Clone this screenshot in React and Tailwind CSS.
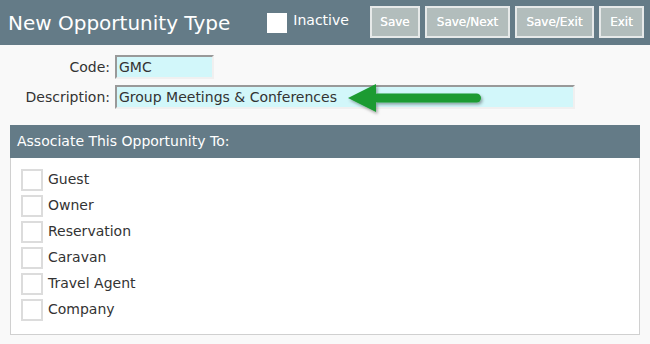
import React from 'react'

const font = { fontFamily: '"DejaVu Sans", Verdana, sans-serif' }

const associations = ['Guest', 'Owner', 'Reservation', 'Caravan', 'Travel Agent', 'Company']

const buttons = [
  { label: 'Save', w: 'w-[50px]' },
  { label: 'Save/Next', w: 'w-[85px]' },
  { label: 'Save/Exit', w: 'w-[79px]' },
  { label: 'Exit', w: 'w-[45px]' },
]

function Arrow() {
  return (
    <svg className="pointer-events-none absolute left-[230px] top-[-4px]" width="142" height="34" viewBox="0 0 142 34">
      <defs>
        <filter id="sh" x="-10%" y="-30%" width="130%" height="170%">
          <feDropShadow dx="1.5" dy="2" stdDeviation="1.5" floodColor="#000" floodOpacity="0.35" />
        </filter>
      </defs>
      <g filter="url(#sh)" fill="#1b9b32">
        <polygon points="1,15 29,1 29,29" />
        <rect x="26" y="10.5" width="108" height="9" rx="4.5" />
      </g>
    </svg>
  )
}

export default function App() {
  return (
    <div className="h-[344px] w-[650px] overflow-hidden bg-[#f9f9f9]" style={font}>
      <div className="flex h-[45px] items-center bg-[#647b87] pl-[8px] pr-[6px]">
        <h1 className="text-[20px] leading-none text-white">New Opportunity Type</h1>
        <div className="ml-[37px] flex items-center">
          <span className="h-[20px] w-[20px] bg-white" />
          <span className="ml-[6px] -mt-[4px] text-[14px] text-white">Inactive</span>
        </div>
        <div className="ml-auto flex gap-[5px] self-start pt-[6px]">
          {buttons.map((b) => (
            <button
              key={b.label}
              className={`${b.w} h-[32px] border-2 border-[#e6e9e9] bg-[#b2bdbc] text-[12px] text-white [text-shadow:0_0_0.4px_#fff]`}
            >
              {b.label}
            </button>
          ))}
        </div>
      </div>

      <div className="grid grid-cols-[110px_auto] items-center gap-x-[5px] gap-y-[6px] pt-[10px] text-[14px] text-[#333]">
        <label className="text-right">Code:</label>
        <div className="flex h-[24px] w-[99px] items-center border-2 border-[#f0f0f0] border-l-[#999] border-t-[#999] bg-[#d2f7fa] px-[2px]">
          GMC
        </div>
        <label className="text-right">Description:</label>
        <div className="relative flex h-[24px] w-[460px] items-center border-2 border-[#f0f0f0] border-l-[#999] border-t-[#999] bg-[#d2f7fa] px-[2px]">
          Group Meetings &amp; Conferences
          <Arrow />
        </div>
      </div>

      <div className="mx-[10px] mt-[16px]">
        <div className="flex h-[33px] items-center bg-[#647b87] px-[7px] text-[14px] text-white">
          Associate This Opportunity To:
        </div>
        <div className="h-[177px] border border-t-0 border-[#d0d0d0] bg-white pl-[10px] pt-[11px]">
          <div className="flex flex-col gap-[4px]">
            {associations.map((a) => (
              <div key={a} className="flex items-center">
                <span className="h-[22px] w-[22px] border-2 border-[#dcdcdc] bg-white" />
                <span className="ml-[5px] -mt-[2px] text-[14px] text-[#333]">{a}</span>
              </div>
            ))}
          </div>
        </div>
      </div>
    </div>
  )
}
